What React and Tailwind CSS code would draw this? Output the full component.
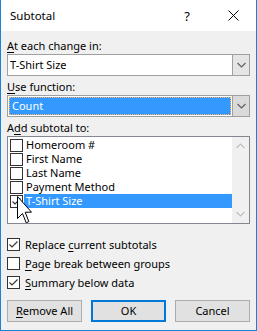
import React from "react";

function Chevron({ up = false, color = "#606060" }) {
  return (
    <svg width="9" height="6" viewBox="0 0 9 6" className="block">
      <polyline
        points={up ? "0.5,5 4.5,1 8.5,5" : "0.5,1 4.5,5 8.5,1"}
        fill="none"
        stroke={color}
        strokeWidth="1.2"
      />
    </svg>
  );
}

function Box({ checked }) {
  return (
    <div className="w-[13px] h-[13px] shrink-0 border border-[#333333] bg-white flex items-center justify-center">
      {checked && (
        <svg width="11" height="11" viewBox="0 0 11 11" className="block">
          <polyline points="1.5,5.5 4,8 9.5,2.5" fill="none" stroke="#333333" strokeWidth="1.1" />
        </svg>
      )}
    </div>
  );
}

function Combo({ children, focused = false }) {
  return (
    <div className="h-[22px] border border-[#a0a0a0] bg-white flex">
      <div className="flex-1 flex items-stretch p-[1px]">{children}</div>
      <div
        className={
          focused
            ? "w-[17px] shrink-0 border-l border-[#a0a0a0] bg-[#dadada] flex items-center justify-center"
            : "w-[17px] shrink-0 border-l border-[#a0a0a0] bg-[#e5e5e5] flex items-center justify-center"
        }
      >
        <Chevron />
      </div>
    </div>
  );
}

const items = [
  { label: "Homeroom #", checked: false },
  { label: "First Name", checked: false },
  { label: "Last Name", checked: false },
  { label: "Payment Method", checked: false },
  { label: "T-Shirt Size", checked: true, selected: true },
];

export default function App() {
  return (
    <div className="relative w-[257px] h-[331px] bg-[#f0f0f0] border-x border-b border-[#1883d7] flex flex-col font-['Noto_Sans',sans-serif] text-[11px] leading-[16px] text-black">
      {/* Title bar */}
      <div className="h-[31px] shrink-0 bg-white flex items-center pl-[9px]">
        <span className="text-[11.5px]">Subtotal</span>
        <div className="ml-auto w-[46px] h-full flex items-center justify-center text-[13px]">?</div>
        <div className="w-[46px] h-full flex items-center justify-center">
          <svg width="11" height="11" viewBox="0 0 11 11" className="block">
            <line x1="0.5" y1="0.5" x2="10.5" y2="10.5" stroke="#000" strokeWidth="1" />
            <line x1="10.5" y1="0.5" x2="0.5" y2="10.5" stroke="#000" strokeWidth="1" />
          </svg>
        </div>
      </div>

      {/* Body */}
      <div className="flex-1 flex flex-col px-[6px] pt-[7px]">
        <div className="h-[16px]">
          <span className="underline underline-offset-2">A</span>t each change in:
        </div>
        <Combo>
          <div className="flex-1 flex items-center pl-[1px]">T-Shirt Size</div>
        </Combo>

        <div className="h-[16px] mt-[3px]">
          <span className="underline underline-offset-2">U</span>se function:
        </div>
        <Combo focused>
          <div className="flex-1 flex items-center pl-[2px] bg-[#3399ff] text-white border border-dotted border-[#ffb060]">
            Count
          </div>
        </Combo>

        <div className="h-[16px] mt-[3px]">
          A<span className="underline underline-offset-2">d</span>d subtotal to:
        </div>
        <div className="h-[88px] border border-[#828790] bg-white flex">
          <div className="flex-1 pt-[1px] flex flex-col">
            {items.map((it) => (
              <div key={it.label} className="h-[14px] flex items-center leading-[14px]">
                <div className="ml-[2px]">
                  <Box checked={it.checked} />
                </div>
                <div
                  className={
                    it.selected
                      ? "ml-[1px] flex-1 h-[14px] flex items-center px-[2px] bg-[#3399ff] text-white"
                      : "ml-[1px] flex-1 h-[14px] flex items-center px-[2px]"
                  }
                >
                  {it.label}
                </div>
              </div>
            ))}
          </div>
          <div className="w-[17px] shrink-0 bg-[#f0f0f0] flex flex-col justify-between items-center py-[6px]">
            <Chevron up color="#c0c0c0" />
            <Chevron color="#c0c0c0" />
          </div>
        </div>

        <div className="mt-[11px] flex flex-col">
          <div className="h-[19px] flex items-center">
            <Box checked />
            <span className="ml-[5px]">
              Replace <span className="underline underline-offset-2">c</span>urrent subtotals
            </span>
          </div>
          <div className="h-[19px] flex items-center">
            <Box checked={false} />
            <span className="ml-[5px]">
              <span className="underline underline-offset-2">P</span>age break between groups
            </span>
          </div>
          <div className="h-[19px] flex items-center">
            <Box checked />
            <span className="ml-[5px]">
              <span className="underline underline-offset-2">S</span>ummary below data
            </span>
          </div>
        </div>

        <div className="mt-[8px] flex justify-between">
          <button className="w-[75px] h-[22px] bg-[#e1e1e1] border border-[#adadad] flex items-center justify-center">
            <span>
              <span className="underline underline-offset-2">R</span>emove All
            </span>
          </button>
          <button className="w-[75px] h-[22px] bg-[#e1e1e1] border-2 border-[#0078d7] flex items-center justify-center">
            OK
          </button>
          <button className="w-[75px] h-[22px] bg-[#e1e1e1] border border-[#adadad] flex items-center justify-center">
            Cancel
          </button>
        </div>
      </div>

      {/* Mouse cursor overlay */}
      <svg
        className="absolute left-[16px] top-[196px] pointer-events-none"
        width="16"
        height="28"
        viewBox="0 0 16 28"
      >
        <path
          d="M0.5,0.5 L0.5,22.5 L5.5,17.5 L9.2,26.8 L11.8,25.6 L8.2,16.2 L14.5,16.2 Z"
          fill="#ffffff"
          stroke="#000000"
          strokeWidth="1"
          strokeLinejoin="miter"
        />
      </svg>
    </div>
  );
}
